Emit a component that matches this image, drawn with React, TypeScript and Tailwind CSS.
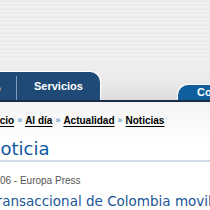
import React from "react";

const crumbs = ["Inicio", "Al día", "Actualidad", "Noticias"];

const App: React.FC = () => {
  return (
    <div className="w-[210px] h-[210px] overflow-hidden bg-white">
      {/* cabecera con rayas */}
      <div className="h-[60px] bg-[repeating-linear-gradient(180deg,#ebebeb_0px,#ebebeb_2px,#f1f1f1_2px,#f1f1f1_4px)]" />

      {/* pestañas */}
      <div className="h-[40px] flex items-end bg-[linear-gradient(180deg,#efefef,#e9e9e9_60%,#dcdcdc)]">
        <div className="-ml-[40px] w-[140px] shrink-0 h-[28px] flex bg-[#1f4a76] rounded-tr-[10px] shadow-[1px_-1px_0_#ffffff]">
          <div className="w-[57px] border-r border-[#7e9cbc] mt-[4px] flex items-center pl-[12px] text-white font-bold text-[11px] font-['Liberation_Sans',Arial,sans-serif]">
            Inicio
          </div>
          <div className="flex-1 flex items-center pl-[17px] text-white font-bold text-[11px] font-['Liberation_Sans',Arial,sans-serif]">
            Servicios
          </div>
        </div>
        <div className="ml-[78px] h-[15px] w-[80px] shrink-0 bg-[#0e5f9b] rounded-tl-[10px] shadow-[-1px_-1px_0_#ffffff] pl-[19px] flex items-center text-white font-bold text-[11px] font-['Liberation_Sans',Arial,sans-serif]">
          Comunidad
        </div>
      </div>
      <div className="h-[2px] bg-[#1a2e4c]" />

      {/* migas */}
      <div className="h-[40px] bg-[linear-gradient(180deg,#f4f4f4,#ffffff)]">
        <div className="-ml-[12px] pt-[11px] flex items-center whitespace-nowrap font-['Liberation_Sans',Arial,sans-serif] text-[10px] font-bold text-black">
          {crumbs.map((c, i) => (
            <React.Fragment key={c}>
              {i > 0 && (
                <span className="mx-[3px] text-[#6f9cc8] text-[9px]">»</span>
              )}
              <a href="#" className="underline underline-offset-[2px]">
                {c}
              </a>
            </React.Fragment>
          ))}
        </div>
      </div>

      {/* título */}
      <div className="border-b-2 border-[#d3dce6] pb-[1px] -mt-[3px]">
        <h1 className="-ml-[13px] text-[18px] leading-[20px] text-[#0d57a1] font-['DejaVu_Sans',Verdana,sans-serif]">
          Noticia
        </h1>
      </div>

      <p className="-ml-[39px] mt-[13px] whitespace-nowrap text-[10px] leading-[12px] text-[#555555] font-['Liberation_Sans',Arial,sans-serif]">
        12/10/2006 - Europa Press
      </p>

      <h2 className="-ml-[107px] mt-[6px] whitespace-nowrap text-[13.5px] leading-[17px] text-[#1a5696] font-['DejaVu_Sans',Verdana,sans-serif]">
        La plataforma transaccional de Colombia moviliza más de 500 millones
      </h2>
    </div>
  );
};

export default App;
